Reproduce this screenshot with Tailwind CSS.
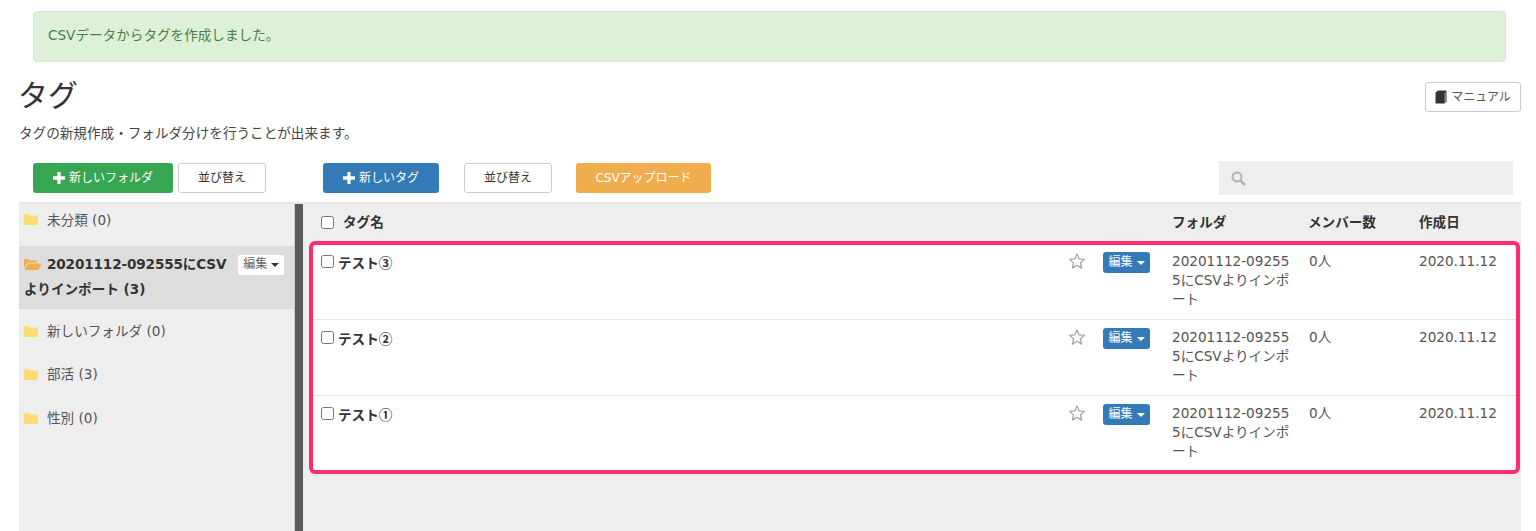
<!DOCTYPE html>
<html lang="ja">
<head>
<meta charset="utf-8">
<title>タグ</title>
<script src="https://cdn.jsdelivr.net/npm/@tailwindcss/browser@4"></script>
</head>
<body class="h-[531px] overflow-hidden bg-white text-[13.6px] text-[#333] font-['DejaVu_Sans','Noto_Sans_CJK_JP',sans-serif]">
  <div class="pt-[11px]">
    <div class="ml-[33px] flex h-[51px] w-[1473px] items-center rounded border border-[#d6e9c6] bg-[#dff0d8] pb-[2px] pl-[14px] text-[#4a7f4b]">CSVデータからタグを作成しました。</div>
  </div>

  <div class="flex items-start justify-between pl-[18px] pr-[15px] pt-[13px]">
    <div>
      <h1 class="text-[30px] leading-[42px] font-normal text-[#333]">タグ</h1>
      <p class="ml-px mt-[6px] leading-[20px] text-[#444]">タグの新規作成・フォルダ分けを行うことが出来ます。</p>
    </div>
    <button class="mt-[7px] flex h-[30px] w-[96px] items-center justify-center gap-[4px] rounded-[3px] border border-[#ccc] bg-white text-[12px] text-[#555]">
      <svg class="h-[14px] w-[12px]" viewBox="0 0 12 14"><path d="M0.500 2.500 L3 0.500 H11.500 V11.500 L9.500 13.500 H0.500 Z" fill="#333"/><path d="M9.500 2.500 H11.500 V11.500 L9.500 13.500 Z" fill="#888"/></svg>
      マニュアル
    </button>
  </div>

  <div class="mt-[18px] flex h-[34px] items-center pl-[33px]">
    <button class="flex h-[30px] w-[140px] items-center justify-center gap-[4px] rounded-[3px] bg-[#37a653] text-[12px] text-white">
      <svg class="h-[12px] w-[12px]" viewBox="0 0 11 11"><path d="M4 0 H7 V4 H11 V7 H7 V11 H4 V7 H0 V4 H4 Z" fill="#fff"/></svg>新しいフォルダ
    </button>
    <button class="ml-[5px] h-[30px] w-[88px] rounded-[3px] border border-[#ccc] bg-white text-[12px] text-[#333]">並び替え</button>
    <button class="ml-[57px] flex h-[30px] w-[116px] items-center justify-center gap-[4px] rounded-[3px] bg-[#337ab7] text-[12px] text-white">
      <svg class="h-[12px] w-[12px]" viewBox="0 0 11 11"><path d="M4 0 H7 V4 H11 V7 H7 V11 H4 V7 H0 V4 H4 Z" fill="#fff"/></svg>新しいタグ
    </button>
    <button class="ml-[25px] h-[30px] w-[88px] rounded-[3px] border border-[#ccc] bg-white text-[12px] text-[#333]">並び替え</button>
    <button class="ml-[24px] h-[30px] w-[135px] rounded-[3px] bg-[#f0ad4e] text-[12px] text-white">CSVアップロード</button>
    <div class="ml-[508px] flex h-[34px] w-[294px] items-center bg-[#eee] pl-[12px]">
      <svg class="h-[15px] w-[15px]" viewBox="0 0 15 15" fill="none" stroke="#b5b5b5"><circle cx="6" cy="6" r="4.500" stroke-width="2"/><path d="M9.500 9.500 L13.500 13.500" stroke-width="2.500" stroke-linecap="round"/></svg>
    </div>
  </div>

  <div class="ml-[19px] mt-[7px] flex h-[330px] w-[1502px] border-t-2 border-[#e6e6e6]">
    <aside class="w-[275px] shrink-0 bg-[#eee] text-[#555]">
      <div class="flex h-[42px] items-start gap-[9px] pl-[5px] pt-[6px] leading-[20px]">
        <svg class="mt-[3px] h-[13px] w-[14px]" viewBox="0 0 14 13"><path d="M0 2 Q0 1 1 1 H5 L6 2.500 H13 Q14 2.500 14 3.500 V11 Q14 12 13 12 H1 Q0 12 0 11 Z" fill="#ffdc73"/></svg>
        <span>未分類 (0)</span>
      </div>
      <div class="h-[63px] bg-[#ddd] pl-[5px] pt-[6px] leading-[25px] font-bold text-[#333]">
        <div class="flex items-center">
          <svg class="h-[13px] w-[18px]" viewBox="0 0 18 13"><path d="M0 2 Q0 1 1 1 H5 L6 2.500 H13 V4.500 H3.500 L0 10 Z" fill="#f0ad4e"/><path d="M4 5.500 H18 L14 12 H0.500 Z" fill="#f0ad4e"/></svg>
          <span class="ml-[5px] tracking-[-0.15px]">20201112-092555にCSV</span>
          <button class="ml-[12px] flex h-[20px] w-[46px] items-center justify-center gap-[4px] rounded-[2px] bg-white text-[12px] font-normal text-[#666]">編集<span class="h-0 w-0 border-x-[4px] border-t-[4px] border-x-transparent border-t-[#333]"></span></button>
        </div>
        <div>よりインポート (3)</div>
      </div>
      <div class="flex h-[44px] items-center gap-[9px] pl-[5px] leading-[20px]">
        <svg class="h-[13px] w-[14px]" viewBox="0 0 14 13"><path d="M0 2 Q0 1 1 1 H5 L6 2.500 H13 Q14 2.500 14 3.500 V11 Q14 12 13 12 H1 Q0 12 0 11 Z" fill="#ffdc73"/></svg>
        <span>新しいフォルダ (0)</span>
      </div>
      <div class="flex h-[42px] items-center gap-[9px] pl-[5px] leading-[20px]">
        <svg class="h-[13px] w-[14px]" viewBox="0 0 14 13"><path d="M0 2 Q0 1 1 1 H5 L6 2.500 H13 Q14 2.500 14 3.500 V11 Q14 12 13 12 H1 Q0 12 0 11 Z" fill="#ffdc73"/></svg>
        <span>部活 (3)</span>
      </div>
      <div class="flex h-[46px] items-center gap-[9px] pl-[5px] leading-[20px]">
        <svg class="h-[13px] w-[14px]" viewBox="0 0 14 13"><path d="M0 2 Q0 1 1 1 H5 L6 2.500 H13 Q14 2.500 14 3.500 V11 Q14 12 13 12 H1 Q0 12 0 11 Z" fill="#ffdc73"/></svg>
        <span>性別 (0)</span>
      </div>
    </aside>
    <div class="w-[9px] shrink-0 border-l border-[#ccc] bg-[#5a5a5a]"></div>
    <main class="min-w-0 flex-1 bg-[#eee]">
      <div class="grid h-[39px] grid-cols-[22px_829px_136px_111px_1fr] items-center pb-[2px] pl-[18px] font-bold text-[#333]">
        <input type="checkbox" class="h-[13px] w-[13px]">
        <span>タグ名</span>
        <span>フォルダ</span>
        <span>メンバー数</span>
        <span>作成日</span>
      </div>
      <div class="relative ml-[6px] mr-px pt-px">
        <div class="h-[76px] border-b border-[#e5e5e5] bg-white">
          <div class="grid grid-cols-[17px_730px_35px_69px_137px_110px_1fr] pl-[12px] pt-[8px] leading-[19px]">
            <input type="checkbox" class="mt-[3px] h-[13px] w-[13px]">
            <span class="mt-[1px] font-bold text-[#333] font-['Noto_Sans_CJK_JP',sans-serif]">テスト③</span>
            <svg class="h-[18px] w-[18px]" viewBox="0 0 24 24" fill="none" stroke="#a5a5a5" stroke-width="1.700" stroke-linejoin="round"><path d="M12 2.500 L14.800 9.200 L22 9.800 L16.500 14.500 L18.200 21.500 L12 17.700 L5.800 21.500 L7.500 14.500 L2 9.800 L9.200 9.200 Z"/></svg>
            <button class="flex h-[21px] w-[47px] items-center justify-center gap-[4px] rounded-[3px] bg-[#337ab7] text-[12px] text-white">編集<span class="h-0 w-0 border-x-[4px] border-t-[4px] border-x-transparent border-t-white"></span></button>
            <span class="w-[122px] break-all text-[#555] [line-break:anywhere]">20201112-092555にCSVよりインポート</span>
            <span class="text-[#555]">0人</span>
            <span class="text-[#555]">2020.11.12</span>
          </div>
        </div>
        <div class="h-[76px] border-b border-[#e5e5e5] bg-white">
          <div class="grid grid-cols-[17px_730px_35px_69px_137px_110px_1fr] pl-[12px] pt-[8px] leading-[19px]">
            <input type="checkbox" class="mt-[3px] h-[13px] w-[13px]">
            <span class="mt-[1px] font-bold text-[#333] font-['Noto_Sans_CJK_JP',sans-serif]">テスト②</span>
            <svg class="h-[18px] w-[18px]" viewBox="0 0 24 24" fill="none" stroke="#a5a5a5" stroke-width="1.700" stroke-linejoin="round"><path d="M12 2.500 L14.800 9.200 L22 9.800 L16.500 14.500 L18.200 21.500 L12 17.700 L5.800 21.500 L7.500 14.500 L2 9.800 L9.200 9.200 Z"/></svg>
            <button class="flex h-[21px] w-[47px] items-center justify-center gap-[4px] rounded-[3px] bg-[#337ab7] text-[12px] text-white">編集<span class="h-0 w-0 border-x-[4px] border-t-[4px] border-x-transparent border-t-white"></span></button>
            <span class="w-[122px] break-all text-[#555] [line-break:anywhere]">20201112-092555にCSVよりインポート</span>
            <span class="text-[#555]">0人</span>
            <span class="text-[#555]">2020.11.12</span>
          </div>
        </div>
        <div class="h-[76px] bg-white">
          <div class="grid grid-cols-[17px_730px_35px_69px_137px_110px_1fr] pl-[12px] pt-[8px] leading-[19px]">
            <input type="checkbox" class="mt-[3px] h-[13px] w-[13px]">
            <span class="mt-[1px] font-bold text-[#333] font-['Noto_Sans_CJK_JP',sans-serif]">テスト①</span>
            <svg class="h-[18px] w-[18px]" viewBox="0 0 24 24" fill="none" stroke="#a5a5a5" stroke-width="1.700" stroke-linejoin="round"><path d="M12 2.500 L14.800 9.200 L22 9.800 L16.500 14.500 L18.200 21.500 L12 17.700 L5.800 21.500 L7.500 14.500 L2 9.800 L9.200 9.200 Z"/></svg>
            <button class="flex h-[21px] w-[47px] items-center justify-center gap-[4px] rounded-[3px] bg-[#337ab7] text-[12px] text-white">編集<span class="h-0 w-0 border-x-[4px] border-t-[4px] border-x-transparent border-t-white"></span></button>
            <span class="w-[122px] break-all text-[#555] [line-break:anywhere]">20201112-092555にCSVよりインポート</span>
            <span class="text-[#555]">0人</span>
            <span class="text-[#555]">2020.11.12</span>
          </div>
        </div>
        <div class="absolute inset-x-0 top-[-2px] h-[233px] rounded-[6px] border-[4px] border-[#ff2d6f]"></div>
      </div>
    </main>
  </div>
</body>
</html>
